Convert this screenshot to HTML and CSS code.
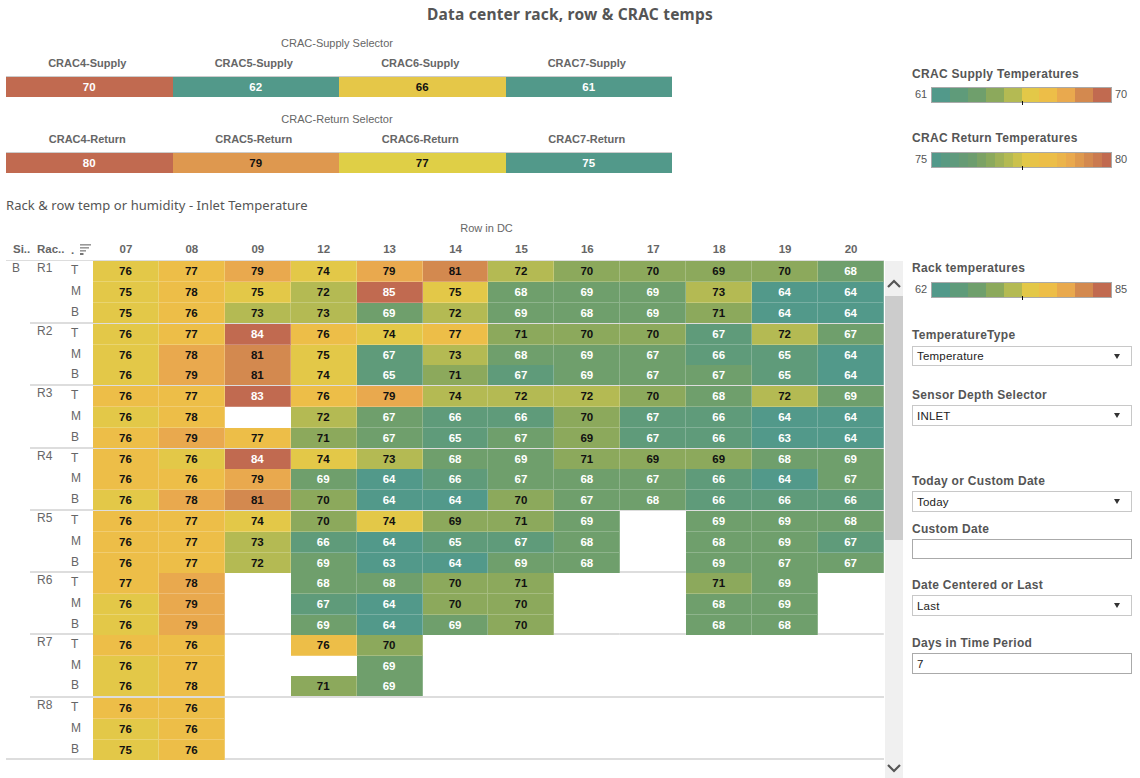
FILE: index.html
```html
<!DOCTYPE html>
<html lang="en">
<head>
<meta charset="utf-8">
<title>Data center rack, row &amp; CRAC temps</title>
<link rel="stylesheet" href="styles.css">
</head>
<body>
<div class="page">
  <h1 class="title">Data center rack, row &amp; CRAC temps</h1>
  <div class="content">
    <main class="left">
      <section class="crac crac-supply">
        <div class="crac-caption">CRAC-Supply Selector</div>
        <div class="crac-heads"><span>CRAC4-Supply</span><span>CRAC5-Supply</span><span>CRAC6-Supply</span><span>CRAC7-Supply</span></div>
        <div class="crac-bar"><span class="s10">70</span><span class="s1">62</span><span class="b-yellow">66</span><span class="s1">61</span></div>
      </section>
      <section class="crac crac-return">
        <div class="crac-caption">CRAC-Return Selector</div>
        <div class="crac-heads"><span>CRAC4-Return</span><span>CRAC5-Return</span><span>CRAC6-Return</span><span>CRAC7-Return</span></div>
        <div class="crac-bar"><span class="s10">80</span><span class="b-orange">79</span><span class="b-lemon">77</span><span class="s1">75</span></div>
      </section>
      <h2 class="subtitle">Rack &amp; row temp or humidity - Inlet Temperature</h2>
      <div class="axis-title">Row in DC</div>
      <div class="heat-head">
        <span class="hl hl-site">Si..</span><span class="hl hl-rack">Rac..</span>
        <span class="hl hl-pos">.<svg class="sort" width="11" height="11" viewBox="0 0 11 11"><rect y="0" width="11" height="1.6" fill="#999"/><rect y="3" width="9" height="1.6" fill="#999"/><rect y="6" width="6" height="1.6" fill="#999"/><rect y="9.2" width="3.5" height="1.6" fill="#555"/></svg></span>
        <span>07</span><span>08</span><span>09</span><span>12</span><span>13</span><span>14</span><span>15</span><span>16</span><span>17</span><span>18</span><span>19</span><span>20</span>
      </div>
      <div class="heat-wrap">
        <div class="heat-body">
          <div class="site">B</div>
          <div class="groups">
            <div class="group"><div class="rack">R1</div><div class="rows">
              <div class="row"><span class="pos">T</span><span class="cell s6">76</span><span class="cell s7">77</span><span class="cell s8">79</span><span class="cell s6">74</span><span class="cell s8">79</span><span class="cell s9">81</span><span class="cell s5">72</span><span class="cell s4">70</span><span class="cell s4">70</span><span class="cell s4">69</span><span class="cell s4">70</span><span class="cell s3">68</span></div>
              <div class="row"><span class="pos">M</span><span class="cell s6">75</span><span class="cell s7">78</span><span class="cell s6">75</span><span class="cell s5">72</span><span class="cell s10">85</span><span class="cell s6">75</span><span class="cell s3">68</span><span class="cell s3">69</span><span class="cell s3">69</span><span class="cell s5">73</span><span class="cell s1">64</span><span class="cell s1">64</span></div>
              <div class="row"><span class="pos">B</span><span class="cell s6">75</span><span class="cell s7">76</span><span class="cell s5">73</span><span class="cell s5">73</span><span class="cell s3">69</span><span class="cell s5">72</span><span class="cell s3">69</span><span class="cell s3">68</span><span class="cell s3">69</span><span class="cell s4">71</span><span class="cell s1">64</span><span class="cell s1">64</span></div>
            </div></div>
            <div class="group"><div class="rack">R2</div><div class="rows">
              <div class="row"><span class="pos">T</span><span class="cell s6">76</span><span class="cell s7">77</span><span class="cell s10">84</span><span class="cell s7">76</span><span class="cell s6">74</span><span class="cell s7">77</span><span class="cell s4">71</span><span class="cell s4">70</span><span class="cell s4">70</span><span class="cell s2">67</span><span class="cell s5">72</span><span class="cell s3">67</span></div>
              <div class="row plain"><span class="pos">M</span><span class="cell s6">76</span><span class="cell s8">78</span><span class="cell s9">81</span><span class="cell s6">75</span><span class="cell s2">67</span><span class="cell s5">73</span><span class="cell s3">68</span><span class="cell s3">69</span><span class="cell s3">67</span><span class="cell s2">66</span><span class="cell s2">65</span><span class="cell s1">64</span></div>
              <div class="row"><span class="pos">B</span><span class="cell s6">76</span><span class="cell s8">79</span><span class="cell s9">81</span><span class="cell s6">74</span><span class="cell s2">65</span><span class="cell s4">71</span><span class="cell s2">67</span><span class="cell s3">69</span><span class="cell s3">67</span><span class="cell s3">67</span><span class="cell s2">65</span><span class="cell s1">64</span></div>
            </div></div>
            <div class="group"><div class="rack">R3</div><div class="rows">
              <div class="row"><span class="pos">T</span><span class="cell s7">76</span><span class="cell s7">77</span><span class="cell s10">83</span><span class="cell s7">76</span><span class="cell s8">79</span><span class="cell s5">74</span><span class="cell s5">72</span><span class="cell s5">72</span><span class="cell s4">70</span><span class="cell s3">68</span><span class="cell s5">72</span><span class="cell s3">69</span></div>
              <div class="row"><span class="pos">M</span><span class="cell s6">76</span><span class="cell s7">78</span><span class="cell"></span><span class="cell s5">72</span><span class="cell s3">67</span><span class="cell s2">66</span><span class="cell s2">66</span><span class="cell s4">70</span><span class="cell s2">67</span><span class="cell s2">66</span><span class="cell s1">64</span><span class="cell s1">64</span></div>
              <div class="row"><span class="pos">B</span><span class="cell s7">76</span><span class="cell s8">79</span><span class="cell s7">77</span><span class="cell s4">71</span><span class="cell s3">67</span><span class="cell s2">65</span><span class="cell s3">67</span><span class="cell s4">69</span><span class="cell s2">67</span><span class="cell s2">66</span><span class="cell s1">63</span><span class="cell s1">64</span></div>
            </div></div>
            <div class="group"><div class="rack">R4</div><div class="rows">
              <div class="row plain"><span class="pos">T</span><span class="cell s7">76</span><span class="cell s6">76</span><span class="cell s10">84</span><span class="cell s6">74</span><span class="cell s5">73</span><span class="cell s3">68</span><span class="cell s3">69</span><span class="cell s4">71</span><span class="cell s4">69</span><span class="cell s4">69</span><span class="cell s3">68</span><span class="cell s3">69</span></div>
              <div class="row"><span class="pos">M</span><span class="cell s7">76</span><span class="cell s7">76</span><span class="cell s8">79</span><span class="cell s3">69</span><span class="cell s1">64</span><span class="cell s2">66</span><span class="cell s3">67</span><span class="cell s3">68</span><span class="cell s3">67</span><span class="cell s2">66</span><span class="cell s1">64</span><span class="cell s3">67</span></div>
              <div class="row"><span class="pos">B</span><span class="cell s6">76</span><span class="cell s8">78</span><span class="cell s9">81</span><span class="cell s4">70</span><span class="cell s1">64</span><span class="cell s1">64</span><span class="cell s4">70</span><span class="cell s3">67</span><span class="cell s3">68</span><span class="cell s2">66</span><span class="cell s2">66</span><span class="cell s2">66</span></div>
            </div></div>
            <div class="group"><div class="rack">R5</div><div class="rows">
              <div class="row"><span class="pos">T</span><span class="cell s7">76</span><span class="cell s7">77</span><span class="cell s6">74</span><span class="cell s4">70</span><span class="cell s6">74</span><span class="cell s4">69</span><span class="cell s4">71</span><span class="cell s3">69</span><span class="cell"></span><span class="cell s3">69</span><span class="cell s3">69</span><span class="cell s3">68</span></div>
              <div class="row"><span class="pos">M</span><span class="cell s7">76</span><span class="cell s7">77</span><span class="cell s5">73</span><span class="cell s2">66</span><span class="cell s1">64</span><span class="cell s2">65</span><span class="cell s2">67</span><span class="cell s3">68</span><span class="cell"></span><span class="cell s3">68</span><span class="cell s3">69</span><span class="cell s2">67</span></div>
              <div class="row"><span class="pos">B</span><span class="cell s7">76</span><span class="cell s7">77</span><span class="cell s5">72</span><span class="cell s3">69</span><span class="cell s1">63</span><span class="cell s1">64</span><span class="cell s3">69</span><span class="cell s3">68</span><span class="cell"></span><span class="cell s3">69</span><span class="cell s3">67</span><span class="cell s3">67</span></div>
            </div></div>
            <div class="group"><div class="rack">R6</div><div class="rows">
              <div class="row"><span class="pos">T</span><span class="cell s7">77</span><span class="cell s8">78</span><span class="cell"></span><span class="cell s3">68</span><span class="cell s3">68</span><span class="cell s4">70</span><span class="cell s4">71</span><span class="cell"></span><span class="cell"></span><span class="cell s4">71</span><span class="cell s3">69</span><span class="cell"></span></div>
              <div class="row"><span class="pos">M</span><span class="cell s6">76</span><span class="cell s8">79</span><span class="cell"></span><span class="cell s2">67</span><span class="cell s1">64</span><span class="cell s4">70</span><span class="cell s4">70</span><span class="cell"></span><span class="cell"></span><span class="cell s3">68</span><span class="cell s3">69</span><span class="cell"></span></div>
              <div class="row"><span class="pos">B</span><span class="cell s6">76</span><span class="cell s8">79</span><span class="cell"></span><span class="cell s3">69</span><span class="cell s1">64</span><span class="cell s3">69</span><span class="cell s4">70</span><span class="cell"></span><span class="cell"></span><span class="cell s3">68</span><span class="cell s3">68</span><span class="cell"></span></div>
            </div></div>
            <div class="group"><div class="rack">R7</div><div class="rows">
              <div class="row"><span class="pos">T</span><span class="cell s7">76</span><span class="cell s7">76</span><span class="cell"></span><span class="cell s7">76</span><span class="cell s4">70</span></div>
              <div class="row plain"><span class="pos">M</span><span class="cell s6">76</span><span class="cell s7">77</span><span class="cell"></span><span class="cell"></span><span class="cell s3">69</span></div>
              <div class="row"><span class="pos">B</span><span class="cell s6">76</span><span class="cell s7">78</span><span class="cell"></span><span class="cell s4">71</span><span class="cell s3">69</span></div>
            </div></div>
            <div class="group"><div class="rack">R8</div><div class="rows">
              <div class="row"><span class="pos">T</span><span class="cell s7">76</span><span class="cell s7">76</span></div>
              <div class="row"><span class="pos">M</span><span class="cell s6">76</span><span class="cell s7">76</span></div>
              <div class="row"><span class="pos">B</span><span class="cell s6">75</span><span class="cell s7">76</span></div>
            </div></div>
          </div>
        </div>
        <div class="scrollbar">
          <div class="scroll-btn"><svg width="14" height="9" viewBox="0 0 14 9"><path d="M1 8L7 2L13 8" fill="none" stroke="#555" stroke-width="2.2"/></svg></div>
          <div class="scroll-thumb"></div>
          <div class="scroll-rest"><svg width="14" height="9" viewBox="0 0 14 9"><path d="M1 1L7 7L13 1" fill="none" stroke="#555" stroke-width="2.2"/></svg></div>
        </div>
      </div>
    </main>
    <aside class="right">
      <h3 class="lbl lbl-supply">CRAC Supply Temperatures</h3>
      <div class="legend"><span class="leg-min">61</span><div class="leg-bar"><i class="s1"></i><i class="s2"></i><i class="s3"></i><i class="s4"></i><i class="s5"></i><i class="s6"></i><i class="s7"></i><i class="s8"></i><i class="s9"></i><i class="s10"></i><b class="tick"></b></div><span class="leg-max">70</span></div>
      <h3 class="lbl lbl-return">CRAC Return Temperatures</h3>
      <div class="legend"><span class="leg-min">75</span><div class="leg-bar leg-smooth"><b class="tick"></b></div><span class="leg-max">80</span></div>
      <h3 class="lbl lbl-rack">Rack temperatures</h3>
      <div class="legend"><span class="leg-min">62</span><div class="leg-bar"><i class="s1"></i><i class="s2"></i><i class="s3"></i><i class="s4"></i><i class="s5"></i><i class="s6"></i><i class="s7"></i><i class="s8"></i><i class="s9"></i><i class="s10"></i><b class="tick"></b></div><span class="leg-max">85</span></div>
      <h3 class="lbl lbl-type">TemperatureType</h3>
      <div class="ctl ctl-narrow"><span>Temperature</span><i class="caret"></i></div>
      <h3 class="lbl lbl-depth">Sensor Depth Selector</h3>
      <div class="ctl"><span>INLET</span><i class="caret"></i></div>
      <h3 class="lbl lbl-today">Today or Custom Date</h3>
      <div class="ctl"><span>Today</span><i class="caret"></i></div>
      <h3 class="lbl lbl-custom">Custom Date</h3>
      <div class="ctl ctl-input ctl-narrow"></div>
      <h3 class="lbl lbl-center">Date Centered or Last</h3>
      <div class="ctl"><span>Last</span><i class="caret"></i></div>
      <h3 class="lbl lbl-days">Days in Time Period</h3>
      <div class="ctl ctl-input"><span>7</span></div>
    </aside>
  </div>
</div>
</body>
</html>
```
FILE: styles.css
```css
* { box-sizing: border-box; }
html, body { margin: 0; padding: 0; background: #fff; }
body { font-family: "Liberation Sans", Arial, sans-serif; color: #555; }
.page { width: 1140px; height: 778px; overflow: hidden; }
.title { margin: 0; height: 30px; text-align: center; font: bold 15.5px/29px "Noto Sans", sans-serif; color: #555; letter-spacing: .2px; }
.content { display: flex; height: 748px; }
.left { width: 903px; flex: none; }
.right { flex: 1; padding-left: 9px; }

.crac { margin-left: 6px; width: 666px; }
.crac-supply { margin-top: 6px; }
.crac-return { margin-top: 15px; }
.crac-caption { height: 14px; line-height: 14px; text-align: center; font-size: 11px; color: #666; padding-right: 4px; }
.crac-heads { display: grid; grid-template-columns: repeat(4, 1fr); height: 26px; line-height: 27px; text-align: center; font-size: 11px; font-weight: bold; color: #666; }
.crac-heads span { padding-right: 4px; }
.crac-bar { display: grid; grid-template-columns: repeat(4, 1fr); height: 21px; line-height: 20px; text-align: center; font-size: 11.5px; font-weight: bold; color: #111; border-top: 1px solid #ccc; border-bottom: 1px solid #ccc; }
.b-yellow { background: #e5c748; }
.b-orange { background: #de984f; }
.b-lemon { background: #dfcf46; }

.subtitle { margin: 23px 0 0 6px; height: 18px; font: normal 13px/18px "Noto Sans", sans-serif; color: #555; letter-spacing: .07px; }
.axis-title { margin: 7px 0 0 6px; width: 878px; padding-left: 83px; height: 14px; line-height: 14px; text-align: center; font-size: 11px; color: #666; }

.heat-head { margin-left: 6px; width: 878px; height: 26px; padding-top: 4px; border-bottom: 1px solid #ddd; display: grid; grid-template-columns: 24px 38px 25px repeat(12, 1fr); text-align: center; font-size: 11.5px; line-height: 20px; font-weight: bold; color: #666; }
.hl { text-align: left; }
.hl-site { padding-left: 7px; }
.hl-rack { padding-left: 7px; }
.hl-pos { padding-left: 3px; display: flex; gap: 6px; align-items: center; }
.sort { flex: none; }

.heat-wrap { display: flex; align-items: flex-start; height: 517px; }
.heat-body { margin-left: 6px; width: 878px; display: flex; }
.site { width: 24px; flex: none; padding: 0 0 0 6px; font-size: 12px; line-height: 15px; color: #666; border-bottom: 2px solid #ddd; }
.groups { flex: 1; }
.group { display: flex; height: 62.25px; border-bottom: 2px solid #ddd; }
.group:first-child { height: 63px; }
.rack { width: 38px; flex: none; padding: 0 0 0 7px; font-size: 12px; line-height: 14px; color: #666; }
.rows { flex: 1; display: flex; flex-direction: column; }
.row { flex: 1 1 0; display: grid; grid-template-columns: 25px repeat(12, 1fr); }
.pos { padding-left: 3px; font-size: 12px; line-height: 18px; color: #666; }
.cell { text-align: center; font-size: 11.5px; font-weight: bold; line-height: 20px; color: #111; border-right: 1px solid rgba(255,255,255,.22); border-bottom: 1px solid rgba(255,255,255,.22); }
.plain .cell { border-bottom: 0; }
.row:last-child .cell { border-bottom: 0; }

.s1 { background: #52998a; color: #fff; }
.s2 { background: #5f9b7a; color: #fff; }
.s3 { background: #6f9f6c; color: #fff; }
.s4 { background: #8ca95c; }
.s5 { background: #b4ba53; }
.s6 { background: #e3c848; }
.s7 { background: #edbe48; }
.s8 { background: #e9a94e; }
.s9 { background: #d3894f; }
.s10 { background: #c16a50; color: #fff; }

.scrollbar { margin-left: 1px; width: 18px; height: 518px; background: #f0f0f0; display: flex; flex-direction: column; align-items: center; }
.scroll-btn { height: 35px; width: 100%; padding-top: 9px; display: flex; align-items: center; justify-content: center; }
.scroll-thumb { height: 244px; width: 100%; background: #ccc; }
.scroll-rest { flex: 1; width: 100%; display: flex; align-items: flex-end; justify-content: center; padding-bottom: 6px; }
.scrollbar svg { display: block; }

.lbl { margin: 0; height: 14px; font-size: 12px; line-height: 15px; font-weight: bold; color: #555; letter-spacing: .3px; }
.lbl-supply { margin-top: 36px; line-height: 16px; }
.lbl-return { margin-top: 28px; }
.lbl-rack { margin-top: 93px; }
.lbl-type { margin-top: 30px; }
.lbl-depth { margin-top: 22px; height: 13px; }
.lbl-today { margin-top: 48px; height: 13px; }
.lbl-custom { margin-top: 9px; line-height: 16px; }
.lbl-center { margin-top: 19px; height: 13px; }
.lbl-days { margin-top: 20px; height: 13px; }

.legend { display: flex; margin-top: 7px; height: 16px; font-size: 11px; line-height: 15px; color: #555; }
.leg-min { width: 19px; flex: none; text-align: left; padding-left: 3px; }
.leg-max { padding-left: 3px; color: #555; }
.leg-bar { position: relative; width: 181px; flex: none; display: flex; border: 1px solid #aaa; }
.leg-bar i { flex: 1; }
.leg-smooth { background: linear-gradient(90deg, #52998a 0 5%, #5a9a82 5% 10%, #5f9a7d 10% 15%, #669b75 15% 20%, #6d9d6e 20% 25%, #7ca265 25% 30%, #8ba95d 30% 35%, #a0b158 35% 40%, #b4ba53 40% 45%, #cbc14d 45% 50%, #e2c847 50% 55%, #e7c348 55% 60%, #ecbe48 60% 70%, #ebb44b 70% 75%, #e9a94e 75% 80%, #de994e 80% 85%, #d3894f 85% 90%, #ca7a50 90% 95%, #c16a50 95% 100%); }
.tick { position: absolute; left: 90px; bottom: -3px; width: 1px; height: 4px; background: #111; }

.ctl { display: flex; align-items: center; justify-content: space-between; margin-top: 4px; width: 220px; height: 21px; padding: 0 11px 0 4px; border: 1px solid #c8c8c8; font-size: 11.5px; color: #222; letter-spacing: .2px; }
.ctl-narrow { height: 20px; }
.ctl-input { border-color: #aaa; }
.caret { width: 0; height: 0; border-left: 3.5px solid transparent; border-right: 3.5px solid transparent; border-top: 5px solid #333; }
```
